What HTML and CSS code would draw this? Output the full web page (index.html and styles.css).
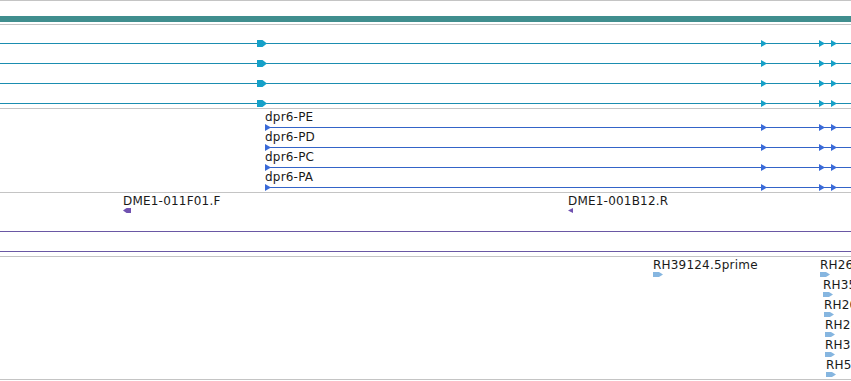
FILE: index.html
```html
<!DOCTYPE html>
<html lang="en">
<head>
<meta charset="utf-8">
<title>Track view</title>
<link rel="stylesheet" href="styles.css">
</head>
<body>
<div class="view">
  <div class="ruler"><div class="ruler-bar"></div></div>

  <section class="track">
    <div class="lines">
      <div class="line teal"><i class="arr big" style="left:257px"></i><i class="arr tri" style="left:761px"></i><i class="arr tri" style="left:819px"></i><i class="arr tri" style="left:831px"></i></div>
      <div class="line teal"><i class="arr big" style="left:257px"></i><i class="arr tri" style="left:761px"></i><i class="arr tri" style="left:819px"></i><i class="arr tri" style="left:831px"></i></div>
      <div class="line teal"><i class="arr big" style="left:257px"></i><i class="arr tri" style="left:761px"></i><i class="arr tri" style="left:819px"></i><i class="arr tri" style="left:831px"></i></div>
      <div class="line teal"><i class="arr big" style="left:257px"></i><i class="arr tri" style="left:761px"></i><i class="arr tri" style="left:819px"></i><i class="arr tri" style="left:831px"></i></div>
    </div>
  </section>

  <section class="track">
    <div class="tx-list">
      <div class="tx"><div class="tx-label">dpr6-PE</div><div class="line blue"><i class="arr tri" style="left:0px"></i><i class="arr tri" style="left:496px"></i><i class="arr tri" style="left:554px"></i><i class="arr tri" style="left:566px"></i></div></div>
      <div class="tx"><div class="tx-label">dpr6-PD</div><div class="line blue"><i class="arr tri" style="left:0px"></i><i class="arr tri" style="left:496px"></i><i class="arr tri" style="left:554px"></i><i class="arr tri" style="left:566px"></i></div></div>
      <div class="tx"><div class="tx-label">dpr6-PC</div><div class="line blue"><i class="arr tri" style="left:0px"></i><i class="arr tri" style="left:496px"></i><i class="arr tri" style="left:554px"></i><i class="arr tri" style="left:566px"></i></div></div>
      <div class="tx"><div class="tx-label">dpr6-PA</div><div class="line blue"><i class="arr tri" style="left:0px"></i><i class="arr tri" style="left:496px"></i><i class="arr tri" style="left:554px"></i><i class="arr tri" style="left:566px"></i></div></div>
    </div>
  </section>

  <section class="track">
    <div class="feat" style="left:123px;top:2px"><div class="feat-label">DME1-011F01.F</div><i class="farr purple-pent"></i></div>
    <div class="feat" style="left:568px;top:2px"><div class="feat-label">DME1-001B12.R</div><i class="farr purple-tri"></i></div>
    <div class="lines lines-low">
      <div class="line purple"></div>
      <div class="line purple"></div>
    </div>
  </section>

  <section class="track track-est">
    <div class="feat" style="left:653px;top:2px"><div class="feat-label">RH39124.5prime</div><i class="farr est"></i></div>
    <div class="feat" style="left:820px;top:2px"><div class="feat-label">RH26423.5prime</div><i class="farr est"></i></div>
    <div class="feat" style="left:823px;top:22px"><div class="feat-label">RH35218.5prime</div><i class="farr est"></i></div>
    <div class="feat" style="left:824px;top:42px"><div class="feat-label">RH20961.5prime</div><i class="farr est"></i></div>
    <div class="feat" style="left:825px;top:62px"><div class="feat-label">RH28719.5prime</div><i class="farr est"></i></div>
    <div class="feat" style="left:825px;top:82px"><div class="feat-label">RH31402.5prime</div><i class="farr est"></i></div>
    <div class="feat" style="left:826px;top:102px"><div class="feat-label">RH51226.5prime</div><i class="farr est"></i></div>
  </section>
</div>
</body>
</html>
```
FILE: styles.css
```css
* { box-sizing: border-box; }
html, body { margin: 0; background: #fff; }
body {
  font-family: "DejaVu Sans", sans-serif;
  font-size: 12px;
  letter-spacing: 0.2px;
  color: #1a1a1a;
  overflow: hidden;
}
.view { width: 851px; height: 381px; overflow: hidden; }

.ruler {
  border-top: 1px solid #c4c4c4;
  border-bottom: 1px solid #c4c4c4;
  padding: 15px 0 2px;
}
.ruler-bar { height: 6px; background: #408e8e; }

.track { position: relative; border-bottom: 1px solid #c4c4c4; }

.lines {
  display: flex;
  flex-direction: column;
  gap: 19px;
  padding: 18px 0 4px;
}
.lines-low { padding-top: 38px; }

.line { position: relative; height: 1px; }
.line.teal { background: #1b8db0; }
.line.blue { background: #3464c8; }
.line.purple { background: #6a58a4; }

.arr { position: absolute; display: block; top: -3px; height: 7px; }
.arr.big { width: 10px; clip-path: polygon(0 0, 55% 0, 100% 50%, 55% 100%, 0 100%); }
.arr.tri { width: 6px; clip-path: polygon(0 0, 100% 50%, 0 100%); }
.teal .arr { background: #15a0c8; }
.blue .arr { background: #3a6ad8; }

.tx-list { margin-left: 265px; padding-bottom: 4px; }
.tx {
  height: 20px;
  display: flex;
  flex-direction: column;
  justify-content: flex-end;
}
.tx:first-child { height: 19px; }
.tx-label { line-height: 14px; margin-bottom: 3px; white-space: nowrap; }

.feat { position: absolute; display: flex; flex-direction: column; align-items: flex-start; }
.feat-label { line-height: 12px; white-space: nowrap; }
.farr { display: block; margin-top: 1px; }
.purple-pent {
  width: 8px; height: 5px; background: #7052b0;
  clip-path: polygon(0 50%, 45% 0, 100% 0, 100% 100%, 45% 100%);
}
.purple-tri {
  width: 5px; height: 5px; background: #7052b0;
  clip-path: polygon(0 50%, 100% 0, 100% 100%);
}

.track-est { height: 123px; }
.est {
  width: 10px; height: 5px; background: #86b6e0;
  clip-path: polygon(0 0, 60% 0, 100% 50%, 60% 100%, 0 100%);
}
```
